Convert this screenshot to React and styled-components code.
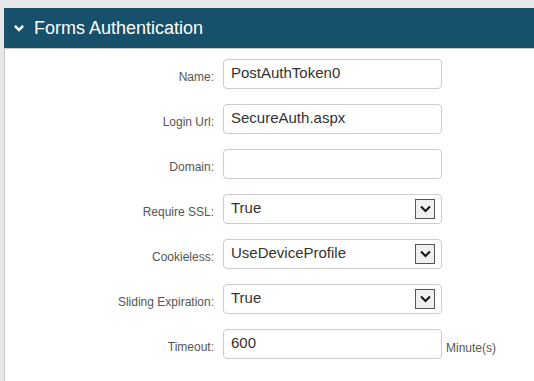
import React from "react";
import styled, { createGlobalStyle } from "styled-components";

const GlobalStyle = createGlobalStyle`
  html, body {
    margin: 0;
    padding: 0;
    background: #e8e8e8;
    font-family: "Liberation Sans", Arial, sans-serif;
  }
`;

const fields = [
  { label: "Name:", value: "PostAuthToken0" },
  { label: "Login Url:", value: "SecureAuth.aspx" },
  { label: "Domain:", value: "" },
  { label: "Require SSL:", value: "True", select: true },
  { label: "Cookieless:", value: "UseDeviceProfile", select: true },
  { label: "Sliding Expiration:", value: "True", select: true },
  { label: "Timeout:", value: "600", suffix: "Minute(s)" },
];

const App = () => {
  return (
    <>
      <GlobalStyle />
      <Page>
        <Panel>
          <Header>
            <Chevron viewBox="0 0 10 7">
              <path d="M0 1.8 L1.8 0 L5 3.2 L8.2 0 L10 1.8 L5 6.8 Z" fill="#fff" />
            </Chevron>
            <Title>Forms Authentication</Title>
          </Header>
          <Form>
            {fields.map((f) => (
              <Row key={f.label}>
                <Label>{f.label}</Label>
                <Field>
                  <Value>{f.value}</Value>
                  {f.select && (
                    <ArrowBox>
                      <svg width="11" height="8" viewBox="0 0 11 8">
                        <path d="M1 1.5 L5.5 6 L10 1.5" stroke="#111" strokeWidth="2" fill="none" />
                      </svg>
                    </ArrowBox>
                  )}
                </Field>
                {f.suffix && <Suffix>{f.suffix}</Suffix>}
              </Row>
            ))}
          </Form>
        </Panel>
      </Page>
    </>
  );
};

export default App;

const Page = styled.div`
  padding: 8px 0 0 4px;
  height: 381px;
  box-sizing: border-box;
  overflow: hidden;
`;

const Panel = styled.section`
  background: #fff;
  border-left: 1px solid #c4c4c4;
  height: 100%;
`;

const Header = styled.div`
  height: 40px;
  margin-left: -1px;
  background: #16506a;
  border-bottom: 1px solid #c8c8c8;
  display: flex;
  align-items: center;
  padding-left: 10px;
`;

const Chevron = styled.svg`
  width: 10px;
  height: 7px;
  margin-right: 10px;
  margin-top: 1px;
`;

const Title = styled.h2`
  margin: 0;
  color: #fff;
  font-size: 18px;
  font-weight: normal;
`;

const Form = styled.div`
  padding-top: 10px;
  display: flex;
  flex-direction: column;
  gap: 15px;
`;

const Row = styled.div`
  display: flex;
  align-items: center;
  height: 30px;
`;

const Label = styled.label`
  width: 209px;
  text-align: right;
  font-size: 12px;
  color: #555;
  padding-top: 6px;
  margin-right: 9px;
`;

const Field = styled.div`
  width: 219px;
  height: 30px;
  box-sizing: border-box;
  border: 1px solid #ccc;
  border-radius: 4px;
  display: flex;
  align-items: center;
  padding-left: 7px;
  padding-right: 6px;
`;

const Value = styled.span`
  flex: 1;
  font-size: 15px;
  color: #333;
  margin-top: -3px;
`;

const ArrowBox = styled.span`
  width: 18px;
  height: 18px;
  border: 1px solid #555;
  background: #f0f0f0;
  display: flex;
  align-items: center;
  justify-content: center;
`;

const Suffix = styled.span`
  margin-left: 4px;
  padding-top: 7px;
  font-size: 12px;
  color: #555;
`;
